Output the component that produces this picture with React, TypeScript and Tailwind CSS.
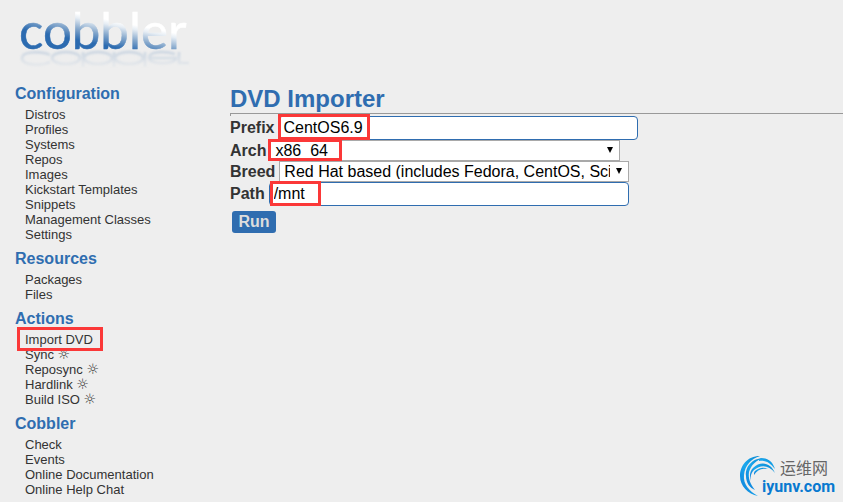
import React from "react";

type MenuItem = { label: string; background?: boolean };
type MenuSection = { title: string; items: MenuItem[] };

const sections: MenuSection[] = [
  {
    title: "Configuration",
    items: [
      { label: "Distros" },
      { label: "Profiles" },
      { label: "Systems" },
      { label: "Repos" },
      { label: "Images" },
      { label: "Kickstart Templates" },
      { label: "Snippets" },
      { label: "Management Classes" },
      { label: "Settings" },
    ],
  },
  { title: "Resources", items: [{ label: "Packages" }, { label: "Files" }] },
  {
    title: "Actions",
    items: [
      { label: "Import DVD" },
      { label: "Sync", background: true },
      { label: "Reposync", background: true },
      { label: "Hardlink", background: true },
      { label: "Build ISO", background: true },
    ],
  },
  {
    title: "Cobbler",
    items: [
      { label: "Check" },
      { label: "Events" },
      { label: "Online Documentation" },
      { label: "Online Help Chat" },
    ],
  },
];

function Highlight({ className }: { className: string }) {
  return (
    <span
      aria-hidden="true"
      className={`pointer-events-none absolute z-10 border-3 border-[#fb3838] ${className}`}
    />
  );
}

function CobblerLogo() {
  return (
    <svg width="180" height="72" viewBox="16 0 180 72" role="img" aria-label="cobbler" className="block">
      <defs>
        <linearGradient id="ink" gradientUnits="userSpaceOnUse" x1="110" y1="20" x2="104" y2="50">
          <stop offset="0" stopColor="#ffffff" />
          <stop offset="0.15" stopColor="#e6edf4" />
          <stop offset="0.5" stopColor="#83a6cb" />
          <stop offset="0.85" stopColor="#2c6bb0" />
        </linearGradient>
        <linearGradient id="mirror" gradientUnits="userSpaceOnUse" x1="0" y1="51" x2="0" y2="68">
          <stop offset="0" stopColor="#bccbdc" />
          <stop offset="1" stopColor="#e6e9ec" />
        </linearGradient>
        <filter id="soft" x="-5%" y="-20%" width="110%" height="140%">
          <feGaussianBlur stdDeviation="0.8" />
        </filter>
      </defs>
      <text x="19" y="49" fontSize="51" fill="url(#ink)" stroke="url(#ink)" strokeWidth="0.5" className="font-['Lato',sans-serif]">
        cobbler
      </text>
      <g fill="none" stroke="url(#mirror)" strokeWidth="2.5" opacity="0.75" filter="url(#soft)">
        <path d="M50 62 C42 66 22 66 22 58 C22 51 42 51 50 55" />
        <ellipse cx="66" cy="58" rx="14" ry="6" />
        <ellipse cx="98" cy="58" rx="14" ry="6" />
        <ellipse cx="129" cy="58" rx="14" ry="6" />
        <path d="M175 54 C165 51 149 51 149 58 C149 65 176 65 176 58 H150" />
        <path d="M83 52V67M114 52V67M145 52V67M179 52V63H189" />
      </g>
    </svg>
  );
}

function Watermark() {
  return (
    <div className="pointer-events-none absolute right-1 bottom-1 h-[46px] w-[100px]">
      <svg width="40" height="44" viewBox="0 0 40 44" aria-hidden="true" className="absolute top-0 left-0">
        <defs>
          <linearGradient id="swirl" x1="0" y1="1" x2="1" y2="0">
            <stop offset="0" stopColor="#0a78d6" />
            <stop offset="0.5" stopColor="#1aa8ee" />
            <stop offset="1" stopColor="#0a86cf" />
          </linearGradient>
        </defs>
        <g fill="url(#swirl)">
          <path d="M21 1 C8 1 1 11 1 21 C1 31 9 39 19 41 C10 36 4 29 5 20 C6 10 12 4 21 1Z" />
          <path d="M25 3 C13 3 6 12 7 21 C7 28 11 33 16 35 C11 29 9 23 10 17 C12 10 17 5 25 3Z" />
          <path d="M20 4 C28 1 34 7 36 14 C31 8 27 5 20 6Z" />
          <path d="M14 13 C22 5 32 8 36 18 C30 10 22 9 15 15 C12 18 11 22 12 26 C10 21 11 16 14 13Z" />
          <path d="M16 16 C21 12 25 12 29 14 C23 13 18 15 15 20 C15 18 15 17 16 16Z" />
        </g>
      </svg>
      <span className="absolute top-[5px] left-[41px] font-['Liberation_Sans','Noto_Sans_CJK_SC',sans-serif] text-[16px] leading-[18px] whitespace-nowrap text-[#666]">
        运维网
      </span>
      <span className="absolute top-[23px] left-[23px] font-['Roboto',sans-serif] text-[16px] leading-[18px] font-bold text-[#0879d0]">
        iyunv.com
      </span>
    </div>
  );
}

function Sidebar() {
  return (
    <nav className="w-[215px] shrink-0 pt-px pl-[15px]">
      {sections.map((section) => (
        <section key={section.title} className="mb-2">
          <h2 className="mb-1 text-[16px] leading-[18px] font-bold text-[#2f6db0]">{section.title}</h2>
          <ul className="pl-2.5">
            {section.items.map((item) => (
              <li key={item.label} className="relative h-[15px] text-[13px] leading-[15px]">
                <a href="#" className="whitespace-nowrap">
                  {item.label}
                  {item.background && (
                    <>
                      {" "}
                      <span className="font-['DejaVu_Sans',sans-serif] text-[14px] leading-none">☼</span>
                    </>
                  )}
                </a>
                {item.label === "Import DVD" && <Highlight className="-top-[5px] -left-2 h-6 w-[86px]" />}
              </li>
            ))}
          </ul>
        </section>
      ))}
    </nav>
  );
}

function SelectField({ id, options }: { id: string; options: string[] }) {
  return (
    <div className="relative w-[350px]">
      <select
        id={id}
        className="block h-[21px] w-full appearance-none border border-[#a9a9a9] bg-white py-0.5 pr-[18px] pl-1 text-[16px] leading-[15px] text-black"
      >
        {options.map((option) => (
          <option key={option}>{option}</option>
        ))}
      </select>
      <svg width="6" height="6" viewBox="0 0 6 6" aria-hidden="true" className="pointer-events-none absolute top-[7px] right-[7px]">
        <path d="M0 0H6L3 6Z" fill="#000" />
      </svg>
    </div>
  );
}

const inputClass = "block h-6 w-[360px] rounded border border-[#2f6db0] bg-white pl-1 text-[16px] text-black";
const labelClass = "shrink-0 text-[16px] leading-[18px] font-bold";

export default function App() {
  return (
    <div className="relative min-h-screen overflow-hidden bg-[#eee] font-['Liberation_Sans','DejaVu_Sans',sans-serif] text-[#333]">
      <header className="h-[84px] px-4">
        <CobblerLogo />
      </header>
      <div className="flex">
        <Sidebar />
        <main className="min-w-0 flex-1 pl-[15px]">
          <h1 className="pt-px text-[24px] leading-7 font-bold text-[#2f6db0]">DVD Importer</h1>
          <hr className="h-[3px] border-t border-l border-[#999]" />
          <form onSubmit={(event) => event.preventDefault()}>
            <div className="relative flex h-6 items-center gap-1">
              <label htmlFor="prefix" className={labelClass}>Prefix</label>
              <input id="prefix" type="text" defaultValue="CentOS6.9" className={inputClass} />
              <Highlight className="-top-0.5 left-12 h-[26px] w-[92px]" />
            </div>
            <div className="relative flex h-[21px] items-center gap-1">
              <label htmlFor="arch" className={labelClass}>Arch</label>
              <SelectField id="arch" options={["x86_64", "i386", "ppc"]} />
              <Highlight className="-top-px left-[38px] h-[22px] w-[74px]" />
            </div>
            <div className="flex h-[21px] items-center gap-1">
              <label htmlFor="breed" className={labelClass}>Breed</label>
              <SelectField
                id="breed"
                options={["Red Hat based (includes Fedora, CentOS, Scientific Linux)", "Debian", "Ubuntu", "SuSE"]}
              />
            </div>
            <div className="relative flex h-6 items-center gap-1">
              <label htmlFor="path" className={labelClass}>Path</label>
              <input id="path" type="text" defaultValue="/mnt" className={inputClass} />
              <Highlight className="-top-px left-10 h-[25px] w-[51px]" />
            </div>
            <button
              type="submit"
              className="mt-[5px] ml-0.5 block h-[22px] w-11 rounded-[3px] bg-[#2f6db0] text-[16px] leading-[22px] font-bold text-[#ddd]"
            >
              Run
            </button>
          </form>
        </main>
      </div>
      <Watermark />
    </div>
  );
}
